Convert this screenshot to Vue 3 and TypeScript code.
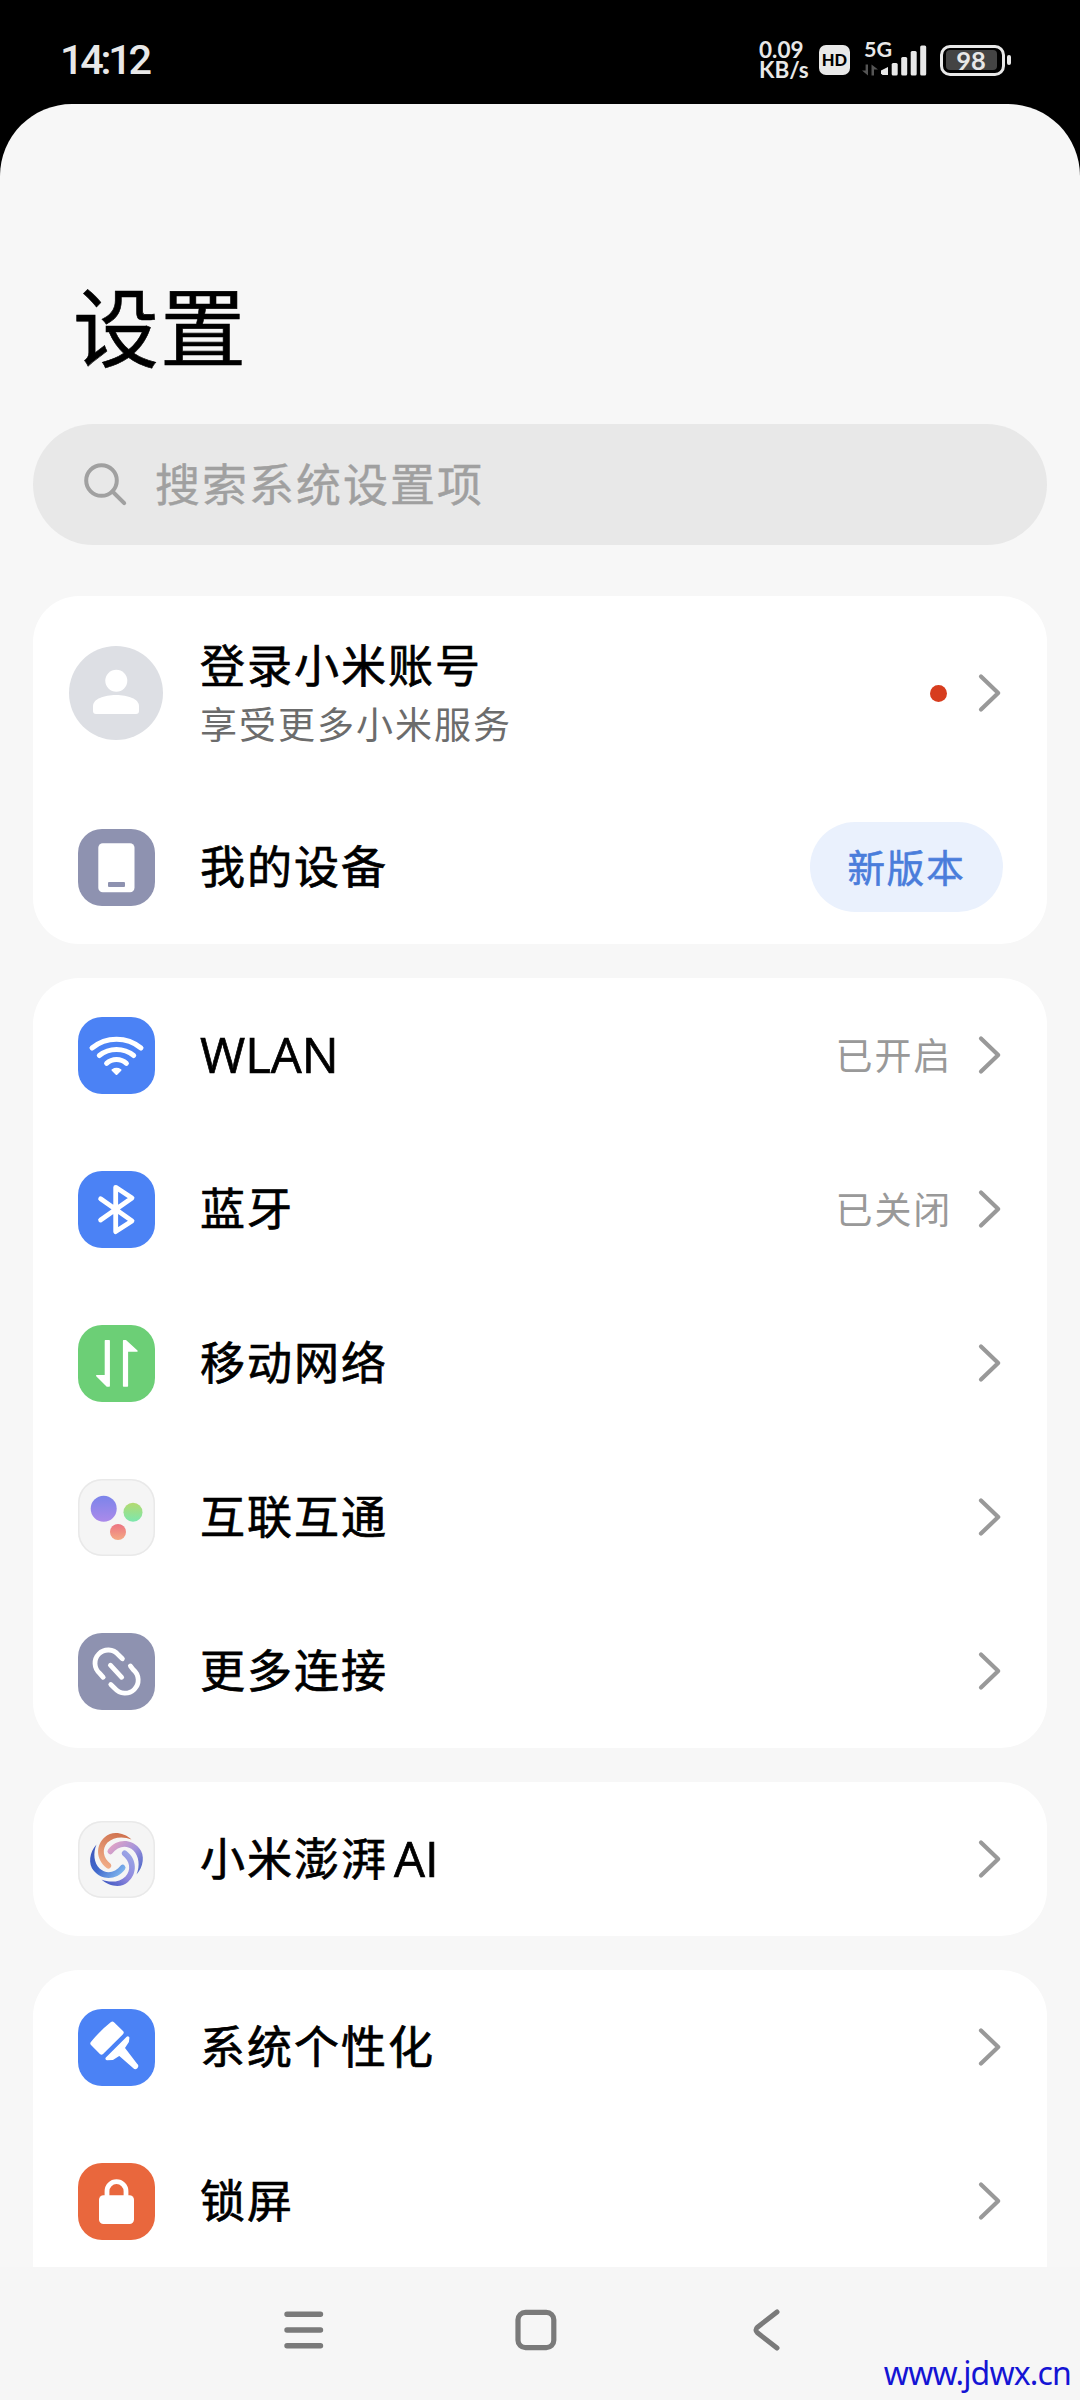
<script setup lang="ts">
type IconName = 'avatar' | 'device' | 'wlan' | 'bluetooth' | 'mobile' | 'interconnect' | 'link' | 'ai' | 'brush' | 'lock'

interface Row {
  icon: IconName
  label: string
  latin?: string
  sub?: string
  value?: string
  badge?: string
  dot?: boolean
}

const groups: Row[][] = [
  [
    { icon: 'avatar', label: '登录小米账号', sub: '享受更多小米服务', dot: true },
    { icon: 'device', label: '我的设备', badge: '新版本' },
  ],
  [
    { icon: 'wlan', label: '', latin: 'WLAN', value: '已开启' },
    { icon: 'bluetooth', label: '蓝牙', value: '已关闭' },
    { icon: 'mobile', label: '移动网络' },
    { icon: 'interconnect', label: '互联互通' },
    { icon: 'link', label: '更多连接' },
  ],
  [{ icon: 'ai', label: '小米澎湃', latin: 'AI' }],
  [
    { icon: 'brush', label: '系统个性化' },
    { icon: 'lock', label: '锁屏' },
  ],
]

const swirl = 'M53.5 18.5 C46 11.6 34 9.6 27 16 C17.6 24 17.5 38.4 28.6 46.9 A2.9 2.9 0 0 0 32.8 43 C24.8 37 23.6 28 29.5 21.6 C35 16 45 14.8 53.5 18.5Z'
</script>

<template>
  <div class="screen">
    <header class="status">
      <span class="clock">14:12</span>
      <div class="indicators">
        <div class="speed">0.09<br />KB/s</div>
        <div class="hd">HD</div>
        <div class="signal">
          <span class="net">5G</span>
          <svg width="66" height="32" viewBox="0 0 66 32">
            <path d="M6 20.5V31.5L0 26.5H3.6V20.5ZM9.5 31.5V20.5L16 25.5H12V31.5Z" fill="#555" />
            <g fill="#e8e8e8">
              <path d="M19 29.5V26.5L26 23V31H20.5Z" />
              <rect x="29.7" y="19" width="6" height="12.5" rx="1.5" />
              <rect x="39.2" y="13" width="6" height="18.5" rx="1.5" />
              <rect x="48.7" y="7" width="6" height="24.5" rx="1.5" />
              <rect x="58.2" y="1.5" width="6" height="30" rx="1.5" />
            </g>
          </svg>
        </div>
        <div class="battery">
          <div class="cell"><span>98</span></div>
          <i class="nub"></i>
        </div>
      </div>
    </header>

    <main class="panel">
      <h1>设置</h1>
      <div class="search">
        <svg width="48" height="48" viewBox="0 0 48 48" fill="none" stroke="#a0a0a0" stroke-width="4">
          <circle cx="20.5" cy="19.5" r="15.3" />
          <path d="M31.5 30.5L43.2 42.2" stroke-linecap="round" />
        </svg>
        <span>搜索系统设置项</span>
      </div>

      <section v-for="(rows, g) in groups" :key="g" class="card">
        <div v-for="row in rows" :key="row.icon" class="row" :class="{ account: row.sub }">
          <div class="lead">
            <svg v-if="row.icon === 'avatar'" width="94" height="94" viewBox="0 0 94 94">
              <circle cx="47" cy="47" r="47" fill="#dddfe4" />
              <circle cx="47.3" cy="34.7" r="11" fill="#fff" />
              <path d="M24 60C24 53 35 49 47 49S70 53 70 60V65a3 3 0 0 1-3 3H27a3 3 0 0 1-3-3Z" fill="#fff" />
            </svg>
            <div v-else class="tile" :class="row.icon">
              <svg width="77" height="77" viewBox="0 0 77 77" fill="none" stroke-linecap="round" stroke-linejoin="round">
                <template v-if="row.icon === 'device'">
                  <rect x="20.3" y="14.3" width="36.2" height="49" rx="4.5" fill="#fff" />
                  <rect x="30" y="53" width="17" height="5" rx="1" fill="#8e92b0" />
                </template>
                <g v-else-if="row.icon === 'wlan'" stroke="#fff" stroke-width="5">
                  <path d="M14 31A38.7 38.7 0 0 1 63 31" />
                  <path d="M21.3 38.5A27.5 27.5 0 0 1 55.7 38.5" />
                  <path d="M28.6 46.3A14.6 14.6 0 0 1 48.4 46.3" />
                  <path d="M34.5 53Q38.5 50.6 42.5 53L38.5 57Z" fill="#fff" stroke-width="2" />
                </g>
                <path v-else-if="row.icon === 'bluetooth'" d="M22.6 27.8L54 49.9L37.7 60.6V16.3L54 27L22.6 49" stroke="#fff" stroke-width="4.8" />
                <g v-else-if="row.icon === 'mobile'" fill="#fff" stroke="#fff" stroke-width="1.4">
                  <path d="M27.4 15.7H31.2V61H29L18.7 50.8H27.4Z" />
                  <path d="M49.4 61H45.6V15.7H47.8L59 26H49.4Z" />
                </g>
                <template v-else-if="row.icon === 'interconnect'">
                  <defs>
                    <linearGradient id="dotPurple" x1="0" y1="0" x2="0" y2="1"><stop offset="0" stop-color="#7b84ea" /><stop offset="1" stop-color="#ab8aea" /></linearGradient>
                    <linearGradient id="dotGreen" x1="0" y1="0" x2="0" y2="1"><stop offset="0" stop-color="#b4da70" /><stop offset="1" stop-color="#7ce7ae" /></linearGradient>
                    <linearGradient id="dotRed" x1="0" y1="0" x2="0" y2="1"><stop offset="0" stop-color="#ec7482" /><stop offset="1" stop-color="#f4aa84" /></linearGradient>
                  </defs>
                  <circle cx="25.7" cy="29.7" r="13" fill="url(#dotPurple)" />
                  <circle cx="55" cy="33.3" r="9.5" fill="url(#dotGreen)" />
                  <circle cx="40" cy="53" r="8" fill="url(#dotRed)" />
                </template>
                <g v-else-if="row.icon === 'link'" stroke="#fff" stroke-width="4.8">
                  <path d="M44.4 25.7L40.3 21.7A13.2 13.2 0 1 0 21.7 40.3L25.2 44.3" />
                  <path d="M52.4 33L55.5 36.9A13.2 13.2 0 1 1 36.9 55.5L32.8 51.5" />
                  <path d="M32.4 32.2L43.7 44.3" />
                </g>
                <template v-else-if="row.icon === 'ai'">
                  <defs>
                    <linearGradient id="armOrange" x1="0.7" y1="0" x2="0.3" y2="1"><stop offset="0" stop-color="#cf714e" /><stop offset="1" stop-color="#f1ad88" /></linearGradient>
                    <linearGradient id="armPink" x1="1" y1="0" x2="0.2" y2="1"><stop offset="0" stop-color="#3d5fc4" /><stop offset="0.5" stop-color="#a193dc" /><stop offset="1" stop-color="#e3a3c4" /></linearGradient>
                    <linearGradient id="armViolet" x1="1" y1="0" x2="0.2" y2="1"><stop offset="0" stop-color="#3050bd" /><stop offset="0.5" stop-color="#8f86dd" /><stop offset="1" stop-color="#9aa7e6" /></linearGradient>
                    <linearGradient id="armBlue" x1="1" y1="0" x2="0.2" y2="1"><stop offset="0" stop-color="#3d52b8" /><stop offset="0.5" stop-color="#4169cc" /><stop offset="1" stop-color="#83baf0" /></linearGradient>
                  </defs>
                  <path :d="swirl" fill="url(#armOrange)" />
                  <path :d="swirl" fill="url(#armPink)" transform="rotate(90 38.5 38.5)" />
                  <path :d="swirl" fill="url(#armViolet)" transform="rotate(180 38.5 38.5)" />
                  <path :d="swirl" fill="url(#armBlue)" transform="rotate(270 38.5 38.5)" />
                </template>
                <g v-else-if="row.icon === 'brush'" fill="#fff" stroke="#fff">
                  <path d="M34.4 14.8L43.4 23.6L23.5 43.4L14.6 34.4Q23.5 23.5 34.4 14.8Z" stroke-width="4.5" />
                  <path d="M29 49.7L49.8 28.9L49.4 32.4L45 39L58.2 56.2A1 1 0 0 1 56.4 58L41.5 45L34.5 49.3Z" stroke-width="3.2" />
                </g>
                <template v-else>
                  <rect x="21" y="32.3" width="35" height="28.7" rx="4.5" fill="#fff" />
                  <path d="M29 34V28.2a9.5 9.5 0 0 1 19 0V34" stroke="#fff" stroke-width="4.8" />
                </template>
              </svg>
            </div>
          </div>
          <div class="text">
            <div class="label"><span v-if="row.label">{{ row.label }}</span><span v-if="row.latin" class="latin" :class="{ after: row.label }">{{ row.latin }}</span></div>
            <div v-if="row.sub" class="sub">{{ row.sub }}</div>
          </div>
          <span v-if="row.value" class="value">{{ row.value }}</span>
          <i v-if="row.dot" class="dot"></i>
          <span v-if="row.badge" class="badge">{{ row.badge }}</span>
          <svg v-else class="chevron" width="26" height="42" viewBox="0 0 26 42" fill="none" stroke="#999" stroke-width="4.2" stroke-linecap="round" stroke-linejoin="round">
            <path d="M4 4.5L21.2 21L4 37.5" />
          </svg>
        </div>
      </section>
    </main>

    <nav class="navbar">
      <svg width="46" height="46" viewBox="0 0 46 46" stroke="#7a7a7a" stroke-width="5.4" stroke-linecap="round">
        <path d="M6 7.2H39.5M6 23H39.5M6 38.8H39.5" />
      </svg>
      <svg width="46" height="46" viewBox="0 0 46 46" fill="none" stroke="#7a7a7a" stroke-width="5.2">
        <rect x="5" y="5.3" width="35.8" height="35.4" rx="7.5" />
      </svg>
      <svg width="46" height="46" viewBox="0 0 46 46" fill="none" stroke="#7a7a7a" stroke-width="5" stroke-linecap="round">
        <path d="M32 5L12.5 20.2Q9.4 23 12.5 25.8L32 41" />
      </svg>
    </nav>
    <div class="watermark">www.jdwx.cn</div>
  </div>
</template>

<style>
body { background: #000; }
</style>

<style scoped>
.screen {
  position: relative;
  width: 1080px;
  height: 2400px;
  display: flex;
  flex-direction: column;
  overflow: hidden;
  background: #000;
  color: #000;
  font-family: "Noto Sans CJK SC", "Noto Sans", sans-serif;
}
svg { display: block; flex: none; }
.status {
  flex: none;
  height: 104px;
  display: flex;
  justify-content: space-between;
  padding: 0 69px 0 60px;
  color: #e8e8e8;
}
.clock {
  font: 500 41.5px/120px Roboto, sans-serif;
  letter-spacing: -3.3px;
}
.indicators { display: flex; height: 120px; align-items: center; }
.speed {
  width: 60px;
  font: 700 22.5px/20.5px Lato, sans-serif;
}
.hd {
  width: 31px;
  height: 30px;
  border-radius: 7px;
  background: #e8e8e8;
  color: #000;
  font: 900 16.5px/30px Lato, sans-serif;
  text-align: center;
}
.signal { position: relative; margin-left: 12px; height: 32px; }
.net {
  position: absolute;
  left: 2px;
  top: -5px;
  font: 700 21.5px/20px Lato, sans-serif;
}
.battery { display: flex; align-items: center; margin-left: 12px; }
.cell {
  width: 65px;
  height: 31px;
  padding: 2.5px;
  border: 3px solid #e8e8e8;
  border-radius: 10px;
  box-sizing: border-box;
}
.cell span {
  display: block;
  height: 20px;
  width: 51px;
  border-radius: 4px;
  background: #444;
  font: 700 25.5px/20px Lato, sans-serif;
  text-align: center;
}
.nub { width: 4px; height: 10px; margin-left: 2px; border-radius: 2px; background: #e8e8e8; }
.panel {
  flex: none;
  height: 2163px;
  overflow: hidden;
  background: #f7f7f7;
  border-radius: 72px 72px 0 0;
  padding: 0 33px;
  box-sizing: border-box;
}
h1 {
  margin: 156px 0 0 40px;
  font-size: 86px;
  line-height: 128px;
  font-weight: 400;
  letter-spacing: 1px;
  -webkit-text-stroke: 0.6px #000;
}
.search {
  display: flex;
  align-items: center;
  height: 121px;
  margin: 36px 0 51px;
  padding-left: 48px;
  border-radius: 61px;
  background: #e8e8e8;
  color: #a0a0a0;
  font-size: 45px;
  letter-spacing: 2px;
}
.search span { margin-left: 26px; padding-bottom: 4px; -webkit-text-stroke: 0.4px #a0a0a0; }
.card {
  margin-bottom: 34px;
  border-radius: 46px;
  background: #fff;
}
.card:last-child { padding-bottom: 60px; }
.row {
  display: flex;
  align-items: center;
  height: 154px;
  padding: 0 44px 0 36px;
}
.row.account { height: 194px; }
.lead { flex: none; width: 94px; display: flex; justify-content: center; margin-right: 37px; }
.tile { width: 77px; height: 77px; border-radius: 24px; }
.device, .link { background: #8e92b0; }
.wlan, .bluetooth, .brush { background: #4b82f5; }
.mobile { background: #6ccf76; }
.interconnect, .ai { background: #f5f5f5; box-shadow: inset 0 0 0 1.5px #e9e9e9; }
.lock { background: #e9673d; }
.text { flex: 1; padding-bottom: 5px; }
.label {
  display: flex;
  align-items: center;
  height: 60px;
  font-size: 45px;
  font-weight: 400;
  letter-spacing: 2px;
  -webkit-text-stroke: 0.7px #000;
}
.latin { font-family: "Open Sans", sans-serif; font-size: 49px; letter-spacing: 0; padding-top: 2px; }
.latin.after { margin-left: 6px; }
.sub {
  height: 50px;
  line-height: 50px;
  margin-top: 4px;
  font-size: 37px;
  letter-spacing: 2px;
  color: #6c6c6c;
}
.value { margin-right: 25px; padding-bottom: 3px; font-size: 37px; letter-spacing: 1.8px; color: #999; }
.dot { width: 17px; height: 17px; margin-right: 30px; border-radius: 50%; background: #d73d1e; }
.badge {
  width: 193px;
  height: 90px;
  border-radius: 45px;
  background: #eaf1fd;
  color: #4a7ddb;
  font-size: 37.5px;
  font-weight: 400;
  -webkit-text-stroke: 0.6px #4a7ddb;
  line-height: 87px;
  letter-spacing: 1.8px;
  text-align: center;
}
.navbar {
  flex: 1;
  display: flex;
  justify-content: center;
  align-items: center;
  gap: 186px;
  padding: 0 9px 8px 0;
  background: #f6f6f6;
}
.watermark {
  position: absolute;
  right: 9px;
  bottom: 5px;
  color: #1414d4;
  font: 400 32px/44px "Noto Sans", sans-serif;
  letter-spacing: -0.85px;
}
</style>
